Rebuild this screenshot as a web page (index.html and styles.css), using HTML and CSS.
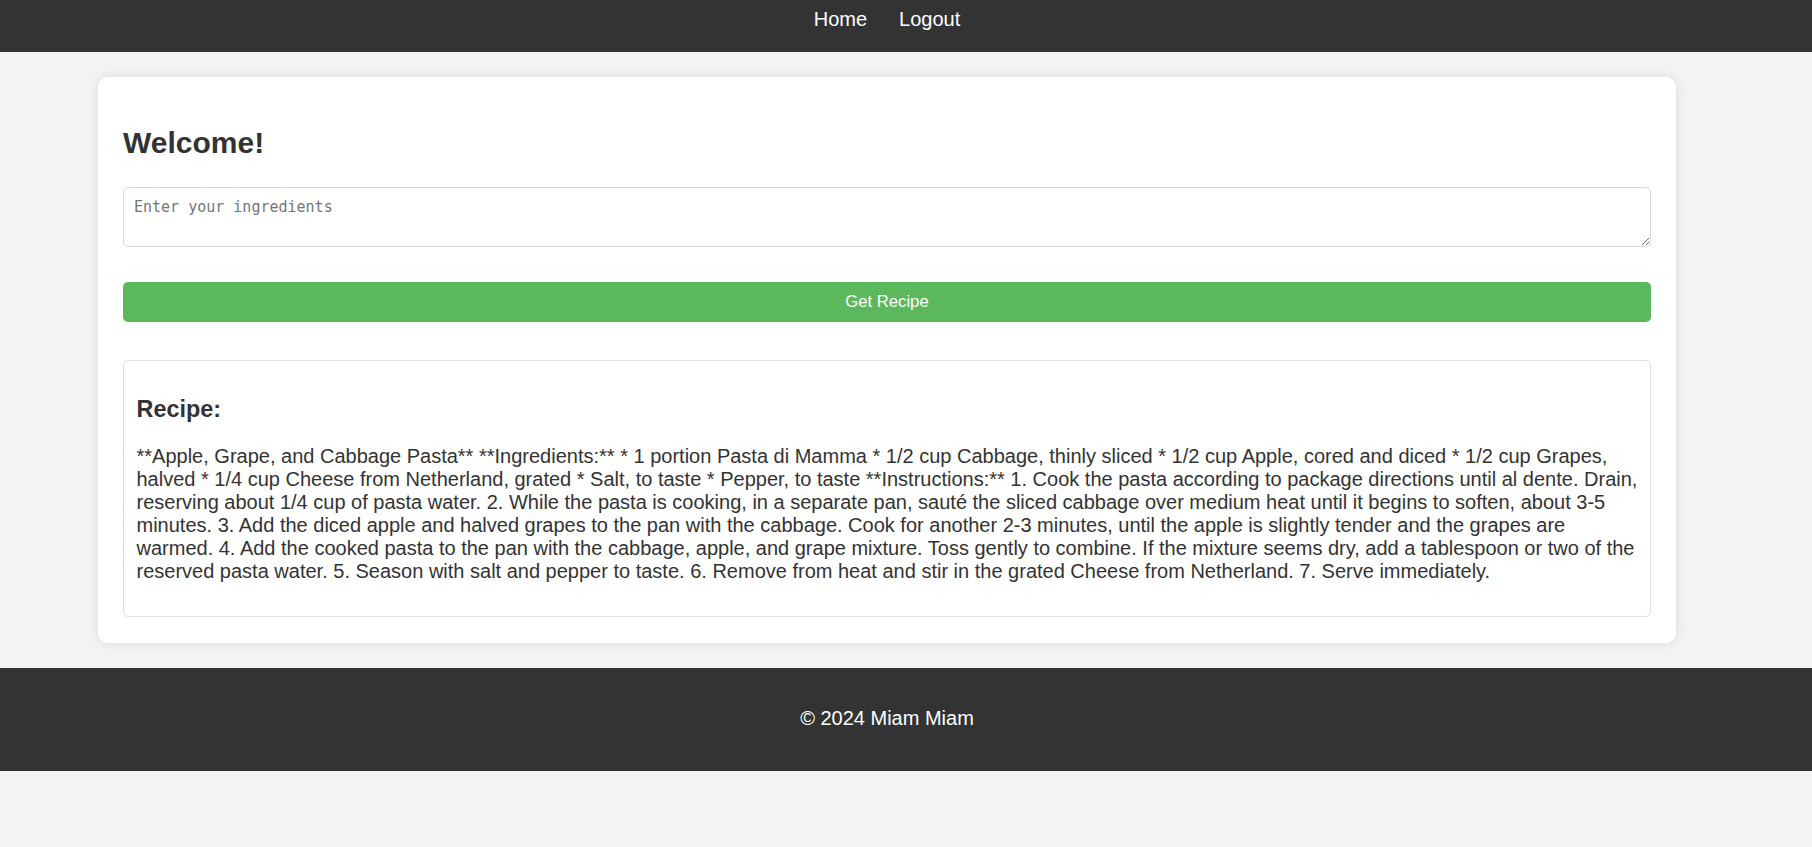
FILE: index.html
```html
<!DOCTYPE html>
<html lang="en">
<head>
<meta charset="utf-8">
<title>Miam Miam</title>
<link rel="stylesheet" href="styles.css">
</head>
<body>
<header class="site-header">
  <nav class="nav">
    <a class="nav-link" href="#">Home</a>
    <a class="nav-link" href="#">Logout</a>
  </nav>
</header>
<main class="main">
  <section class="card">
    <h2 class="welcome">Welcome!</h2>
    <form class="recipe-form">
      <textarea class="ingredients" placeholder="Enter your ingredients"></textarea>
      <button class="submit-btn" type="button">Get Recipe</button>
    </form>
    <div class="recipe-box">
      <h3 class="recipe-title">Recipe:</h3>
      <p class="recipe-text">**Apple, Grape, and Cabbage Pasta** **Ingredients:** * 1 portion Pasta di Mamma * 1/2 cup Cabbage, thinly sliced * 1/2 cup Apple, cored and diced * 1/2 cup Grapes, halved * 1/4 cup Cheese from Netherland, grated * Salt, to taste * Pepper, to taste **Instructions:** 1. Cook the pasta according to package directions until al dente. Drain, reserving about 1/4 cup of pasta water. 2. While the pasta is cooking, in a separate pan, sauté the sliced cabbage over medium heat until it begins to soften, about 3-5 minutes. 3. Add the diced apple and halved grapes to the pan with the cabbage. Cook for another 2-3 minutes, until the apple is slightly tender and the grapes are warmed. 4. Add the cooked pasta to the pan with the cabbage, apple, and grape mixture. Toss gently to combine. If the mixture seems dry, add a tablespoon or two of the reserved pasta water. 5. Season with salt and pepper to taste. 6. Remove from heat and stir in the grated Cheese from Netherland. 7. Serve immediately.</p>
    </div>
  </section>
</main>
<footer class="site-footer">
  <p class="copyright">© 2024 Miam Miam</p>
</footer>
</body>
</html>
```

FILE: styles.css
```css
html, body {
  margin: 0;
  padding: 0;
}

body {
  background: #f3f3f3;
  color: #333333;
  font-family: "Liberation Sans", Arial, sans-serif;
  font-size: 20px;
  line-height: 23px;
}

.site-header {
  background: #333333;
  height: 52px;
  box-sizing: border-box;
  padding: 8px 38px 0 0;
}

.nav {
  display: flex;
  justify-content: center;
  gap: 32px;
}

.nav-link {
  color: #ffffff;
  text-decoration: none;
  font-size: 20px;
  line-height: 23px;
}

.main {
  padding: 25px 136px 25px 98px;
}

.card {
  background: #ffffff;
  border-radius: 10px;
  box-shadow: 0 0 12px rgba(0, 0, 0, 0.1);
  padding: 25px 25px 26px;
}

.welcome {
  margin: 23.5px 0 26.5px;
  font-size: 30px;
  line-height: 34.5px;
  font-weight: bold;
}

.recipe-form {
  display: flex;
  flex-direction: column;
}

.ingredients {
  display: block;
  box-sizing: border-box;
  width: 100%;
  height: 60px;
  margin: 0 0 35px;
  padding: 10px;
  border: 1px solid #d9d9d9;
  border-radius: 5px;
  font-family: "DejaVu Sans Mono", "Liberation Mono", monospace;
  font-size: 15px;
  color: #333333;
  background: #ffffff;
}

.ingredients::placeholder {
  color: #757575;
}

.submit-btn {
  display: block;
  box-sizing: border-box;
  width: 100%;
  height: 40px;
  margin: 0 0 38px;
  padding: 0;
  border: none;
  border-radius: 5px;
  background: #5cb85c;
  color: #ffffff;
  font-family: "Liberation Sans", Arial, sans-serif;
  font-size: 16.67px;
  cursor: pointer;
}

.recipe-box {
  border: 1px solid #dddddd;
  border-radius: 5px;
  padding: 12.5px;
}

.recipe-title {
  margin: 23.4px 0 21.7px;
  font-size: 23.4px;
  line-height: 27px;
  font-weight: bold;
}

.recipe-text {
  margin: 0 0 20px;
  font-size: 20px;
  line-height: 23px;
}

.site-footer {
  background: #333333;
  color: #ffffff;
  padding: 39px 38px 41px 0;
  text-align: center;
}

.copyright {
  margin: 0;
  font-size: 20px;
  line-height: 23px;
}
```
